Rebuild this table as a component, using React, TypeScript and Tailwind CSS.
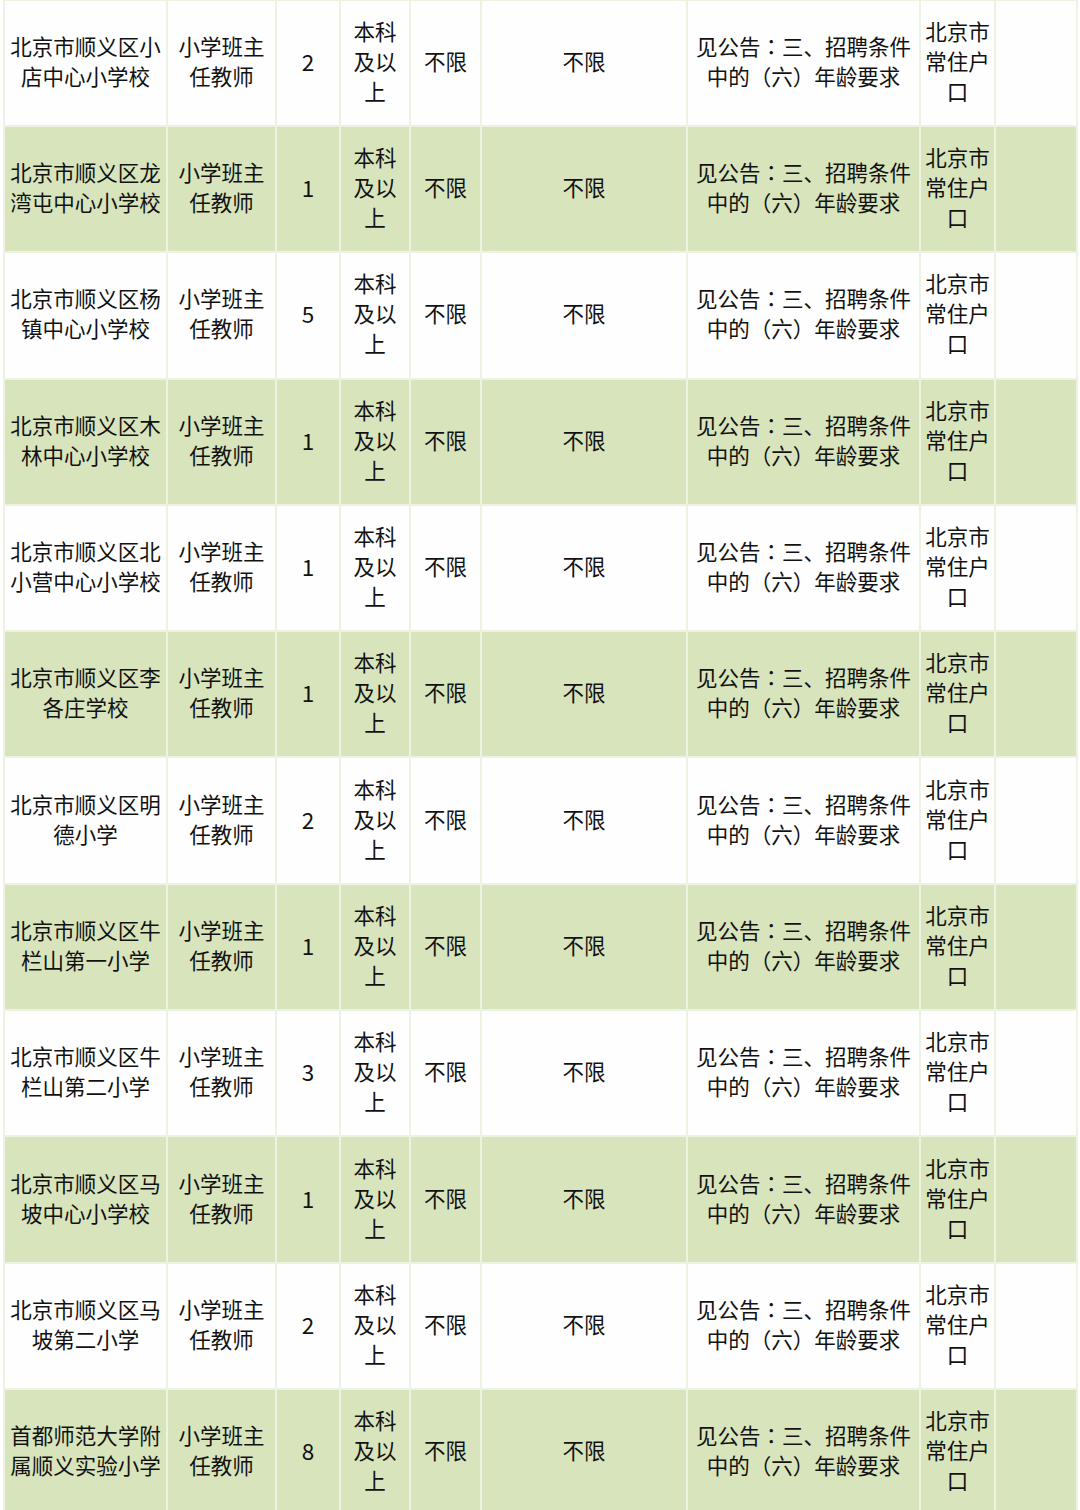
import React from "react";

const rows: [string, string, string][] = [
  ["北京市顺义区小", "店中心小学校", "2"],
  ["北京市顺义区龙", "湾屯中心小学校", "1"],
  ["北京市顺义区杨", "镇中心小学校", "5"],
  ["北京市顺义区木", "林中心小学校", "1"],
  ["北京市顺义区北", "小营中心小学校", "1"],
  ["北京市顺义区李", "各庄学校", "1"],
  ["北京市顺义区明", "德小学", "2"],
  ["北京市顺义区牛", "栏山第一小学", "1"],
  ["北京市顺义区牛", "栏山第二小学", "3"],
  ["北京市顺义区马", "坡中心小学校", "1"],
  ["北京市顺义区马", "坡第二小学", "2"],
  ["首都师范大学附", "属顺义实验小学", "8"],
];

export default function App() {
  return (
    <div
      className="w-[1080px] h-[1510px] overflow-hidden bg-white text-[#121212]"
      style={{ fontFamily: '"Noto Sans CJK SC", "Noto Sans", sans-serif' }}
    >
      <div className="ml-[3px] -mt-[1.3px] w-[1075px] bg-[#edf2e1] p-[2px]">
        <div className="grid grid-cols-[161px_107px_62px_68px_69px_204px_231px_73px_80px] auto-rows-[124.3px] gap-[2px] text-[21.5px] leading-[30px]">
          {rows.map((r, i) => {
            const bg = i % 2 === 1 ? "bg-[#d8e4bc]" : "bg-[#fefefe]";
            const cell = `${bg} flex items-center justify-center text-center pb-[4px]`;
            return (
              <React.Fragment key={i}>
                <div className={cell}>
                  <span className="whitespace-nowrap">
                    {r[0]}
                    <br />
                    {r[1]}
                  </span>
                </div>
                <div className={cell}>
                  <span>
                    小学班主
                    <br />
                    任教师
                  </span>
                </div>
                <div className={cell}>
                  <span className="text-[22.5px]">{r[2]}</span>
                </div>
                <div className={cell}>
                  <span>
                    本科
                    <br />
                    及以
                    <br />
                    上
                  </span>
                </div>
                <div className={cell}>
                  <span>不限</span>
                </div>
                <div className={cell}>
                  <span>不限</span>
                </div>
                <div className={cell}>
                  <span className="whitespace-nowrap">
                    见公告<span className="font-['Noto_Sans_CJK_TC']">：</span>三、招聘条件
                    <br />
                    中的（六）年龄要求
                  </span>
                </div>
                <div className={cell}>
                  <span>
                    北京市
                    <br />
                    常住户
                    <br />
                    口
                  </span>
                </div>
                <div className={bg}></div>
              </React.Fragment>
            );
          })}
        </div>
      </div>
    </div>
  );
}
